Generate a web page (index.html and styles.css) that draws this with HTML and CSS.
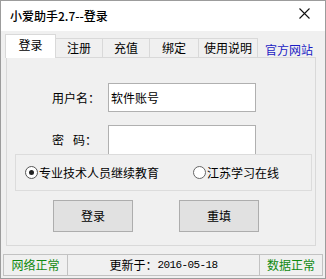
FILE: index.html
```html
<!DOCTYPE html>
<html lang="zh">
<head>
<meta charset="utf-8">
<title>小爱助手2.7--登录</title>
<link rel="stylesheet" href="styles.css">
</head>
<body>
<div class="win">
  <div class="titlebar">
    <span class="title">小爱助手2.7--登录</span>
    <svg class="close" width="11" height="11" viewBox="0 0 11 11"><path d="M0.5 0.5 L10.5 10.5 M10.5 0.5 L0.5 10.5" stroke="#111" stroke-width="1.1" fill="none"/></svg>
  </div>
  <div class="tabs">
    <div class="tab active w50">登录</div>
    <div class="tab w47">注册</div>
    <div class="tab w47">充值</div>
    <div class="tab w49">绑定</div>
    <div class="tab w59">使用说明</div>
    <a class="site">官方网站</a>
  </div>
  <div class="panel">
    <div class="row first">
      <span class="label">用户名：</span>
      <div class="input">软件账号</div>
    </div>
    <div class="row second">
      <span class="label">密<span class="sp"></span>码：</span>
      <div class="input open"></div>
    </div>
    <div class="group">
      <span class="radio on"></span><span class="rtext">专业技术人员继续教育</span>
      <span class="radio r2"></span><span class="rtext">江苏学习在线</span>
    </div>
    <div class="buttons">
      <div class="btn">登录</div>
      <div class="btn">重填</div>
    </div>
  </div>
  <div class="status">
    <div class="cell s1 ok">网络正常</div>
    <div class="cell s2">更新于：<span class="date">2016-05-18</span></div>
    <div class="cell s3 ok">数据正常</div>
  </div>
</div>
</body>
</html>
```
FILE: styles.css
```css
* { box-sizing: border-box; }
html, body { margin: 0; padding: 0; background: #f0f0f0; }
body {
  font-family: "Noto Sans CJK SC", "Noto Sans", sans-serif;
  font-size: 12px;
  color: #000;
}
.win {
  width: 326px;
  height: 279px;
  border: 1px solid #9c9c9c;
  background: #f0f0f0;
  display: flex;
  flex-direction: column;
  overflow: hidden;
}
.titlebar {
  height: 30px;
  background: #fff;
  display: flex;
  align-items: center;
  padding-left: 9px;
  flex: none;
}
.title { font-size: 12px; line-height: 14px; font-weight: 500; }
.close { margin-left: auto; margin-right: 15px; margin-top: -5px; }
.tabs {
  display: flex;
  align-items: flex-end;
  height: 24px;
  margin: 3px 0 -1px 4px;
  flex: none;
}
.tab {
  height: 20px;
  border: 1px solid #d9d9d9;
  border-bottom: none;
  margin-right: -1px;
  background: #f0f0f0;
  display: flex;
  align-items: center;
  justify-content: center;
  padding-bottom: 1px;
  line-height: 14px;
}
.tab.active {
  height: 24px;
  background: #fff;
  position: relative;
  z-index: 2;
  padding-bottom: 4px;
}
.w50 { width: 51px; }
.w47 { width: 48px; }
.w49 { width: 50px; }
.w59 { width: 60px; }
.site {
  color: #1b1bc4;
  margin-left: 8px;
  line-height: 14px;
  margin-bottom: 1px;
}
.panel {
  margin: 0 9px 0 5px;
  height: 189px;
  border: 1px solid #d9d9d9;
  background: #f0f0f0;
  flex: none;
  position: relative;
  z-index: 1;
}
.row {
  display: flex;
  align-items: center;
  padding-left: 45px;
  height: 29px;
}
.row.first { margin-top: 25px; }
.row.second { margin-top: 13px; }
.label { width: 56px; line-height: 14px; }
.sp { display: inline-block; width: 9px; }
.input {
  width: 148px;
  height: 29px;
  border: 1px solid #b0b0b0;
  background: #fff;
  padding-left: 2px;
  display: flex;
  align-items: center;
  line-height: 14px;
}
.input.open { border-bottom: none; }
.group {
  margin-left: 8px;
  width: 297px;
  height: 37px;
  border: 1px solid #dcdcdc;
  display: flex;
  align-items: center;
  padding-left: 9px;
}
.radio {
  width: 13px;
  height: 13px;
  border-radius: 50%;
  border: 1px solid #555;
  background: #fff;
  position: relative;
  flex: none;
  margin-right: 1px;
}
.radio.on::after {
  content: "";
  position: absolute;
  left: 3px;
  top: 3px;
  width: 5px;
  height: 5px;
  border-radius: 50%;
  background: #222;
}
.radio.r2 { margin-left: 34px; border-color: #666; margin-right: 1px; }
.rtext { line-height: 14px; }
.buttons {
  display: flex;
  margin-top: 9px;
  padding-left: 46px;
  gap: 46px;
}
.btn {
  width: 80px;
  height: 32px;
  border: 1px solid #adadad;
  background: #e1e1e1;
  display: flex;
  align-items: center;
  justify-content: center;
  line-height: 14px;
}
.status {
  display: flex;
  margin: 8px 0 0 2px;
  height: 22px;
  flex: none;
}
.cell {
  height: 22px;
  border: 1px solid #c2c2c2;
  display: flex;
  align-items: center;
  justify-content: center;
  line-height: 14px;
  margin-right: -1px;
}
.s1 { width: 65px; }
.s2 { width: 193px; }
.s3 { width: 64px; }
.ok { color: #108a10; }
.date {
  font-family: "Liberation Mono", monospace;
  font-size: 11px;
  letter-spacing: -0.6px;
}
```
